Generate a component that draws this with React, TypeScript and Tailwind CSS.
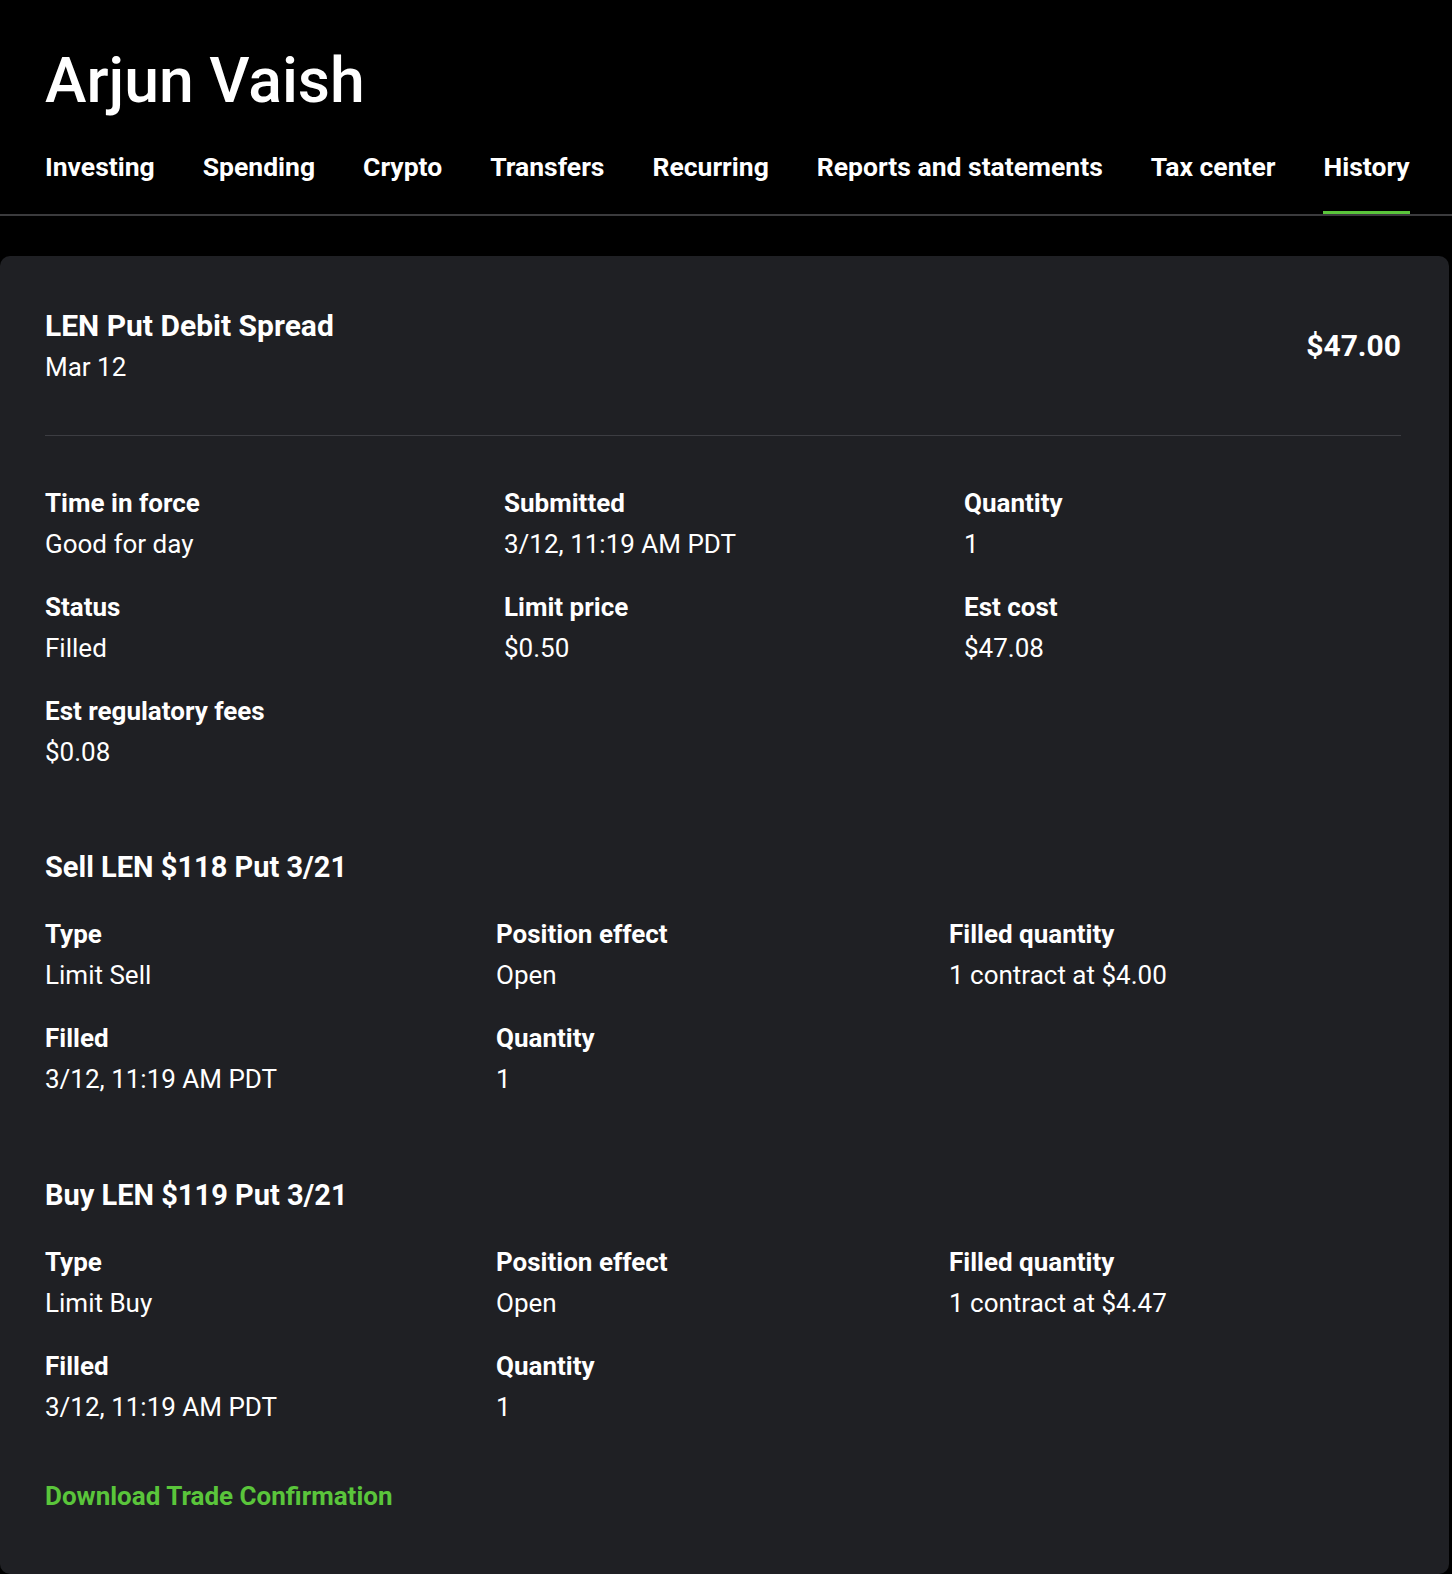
import React from 'react'

interface Field {
  label: string
  value: string
}

const tabs = [
  'Investing',
  'Spending',
  'Crypto',
  'Transfers',
  'Recurring',
  'Reports and statements',
  'Tax center',
  'History',
]

const orderFields: Field[] = [
  { label: 'Time in force', value: 'Good for day' },
  { label: 'Submitted', value: '3/12, 11:19 AM PDT' },
  { label: 'Quantity', value: '1' },
  { label: 'Status', value: 'Filled' },
  { label: 'Limit price', value: '$0.50' },
  { label: 'Est cost', value: '$47.08' },
  { label: 'Est regulatory fees', value: '$0.08' },
]

const legs: { title: string; fields: Field[] }[] = [
  {
    title: 'Sell LEN $118 Put 3/21',
    fields: [
      { label: 'Type', value: 'Limit Sell' },
      { label: 'Position effect', value: 'Open' },
      { label: 'Filled quantity', value: '1 contract at $4.00' },
      { label: 'Filled', value: '3/12, 11:19 AM PDT' },
      { label: 'Quantity', value: '1' },
    ],
  },
  {
    title: 'Buy LEN $119 Put 3/21',
    fields: [
      { label: 'Type', value: 'Limit Buy' },
      { label: 'Position effect', value: 'Open' },
      { label: 'Filled quantity', value: '1 contract at $4.47' },
      { label: 'Filled', value: '3/12, 11:19 AM PDT' },
      { label: 'Quantity', value: '1' },
    ],
  },
]

function FieldCell({ field }: { field: Field }) {
  return (
    <div>
      <div className="text-[26px] leading-[32px] font-bold text-white">{field.label}</div>
      <div className="mt-[9px] text-[26px] leading-[32px] text-white">{field.value}</div>
    </div>
  )
}

export default function App() {
  return (
    <div className="h-[1574px] overflow-hidden bg-black flex flex-col font-[Roboto,'Liberation_Sans',sans-serif]">
      {/* Header */}
      <header className="pt-[50px]">
        <h1 className="px-[45px] text-[62.5px] leading-[62px] font-medium text-white">Arjun Vaish</h1>
        <nav className="mt-[39px] px-[45px] flex gap-12 border-b-2 border-[#3b3b3d]">
          {tabs.map((tab) => (
            <div
              key={tab}
              className={`shrink-0 whitespace-nowrap pb-[28px] border-b-[3px] text-[26.5px] leading-[32px] font-bold text-white ${
                tab === 'History' ? 'border-[#5ac53b]' : 'border-transparent'
              }`}
            >
              {tab}
            </div>
          ))}
        </nav>
      </header>

      {/* Order card */}
      <main className="mt-[40px] w-[1449px] flex-1 rounded-[10px] bg-[#1f2024] pl-[45px] pr-[48px] pt-[52px]">
        <div className="flex items-center justify-between">
          <div>
            <h2 className="text-[30px] leading-[36px] font-bold text-white">LEN Put Debit Spread</h2>
            <div className="mt-[7px] text-[26px] leading-[32px] text-white">Mar 12</div>
          </div>
          <div className="text-[30px] leading-[36px] font-bold text-white">$47.00</div>
        </div>

        <div className="mt-[52px] h-px bg-[#3c3d42]" />

        <div className="mt-[51px] grid grid-cols-[459px_460px_1fr] gap-y-[31px]">
          {orderFields.map((f) => (
            <FieldCell key={f.label} field={f} />
          ))}
        </div>

        {legs.map((leg, i) => (
          <section key={leg.title} className={i === 0 ? 'mt-[81px]' : 'mt-[82px]'}>
            <h3 className="text-[29px] leading-[36px] font-bold text-white">{leg.title}</h3>
            <div className="mt-[33px] grid grid-cols-[451px_453px_1fr] gap-y-[31px]">
              {leg.fields.map((f) => (
                <FieldCell key={f.label} field={f} />
              ))}
            </div>
          </section>
        ))}

        <a href="#" className="mt-[57px] block w-fit text-[26px] leading-[32px] font-bold text-[#5ac53b]">
          Download Trade Confirmation
        </a>
      </main>
    </div>
  )
}
